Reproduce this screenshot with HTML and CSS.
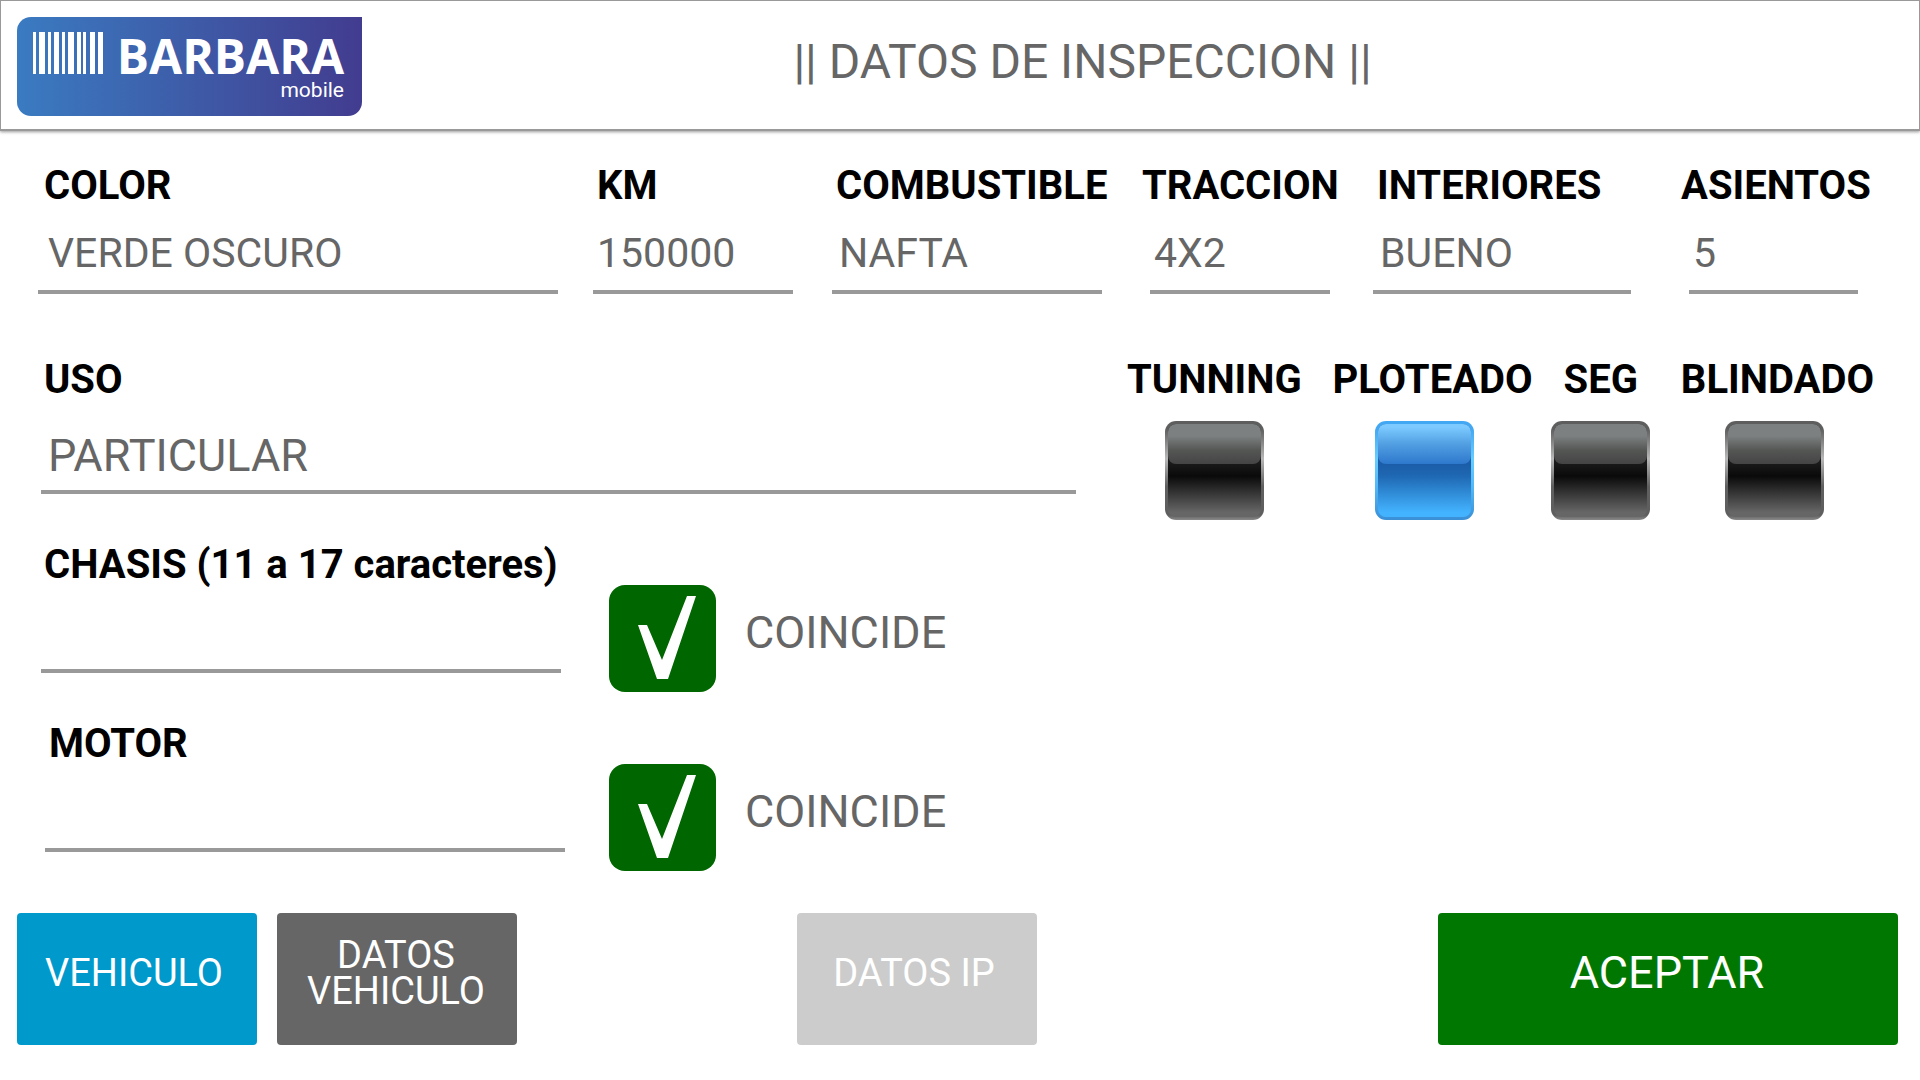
FILE: index.html
```html
<!DOCTYPE html>
<html lang="es">
<head>
<meta charset="utf-8">
<meta name="viewport" content="width=device-width, initial-scale=1">
<title>Datos de inspeccion</title>
<link rel="stylesheet" href="styles.css">
</head>
<body>
<header class="topbar">
  <svg class="logo" viewBox="0 0 345 99" role="img" aria-label="Barbara mobile">
    <defs>
      <linearGradient id="logo-fill" x1="0" y1="0" x2="1" y2="0">
        <stop offset="0" stop-color="#3a7bc1"/>
        <stop offset="1" stop-color="#423c8f"/>
      </linearGradient>
    </defs>
    <path fill="url(#logo-fill)" d="M14 0H345V85A14 14 0 0 1 331 99H14A14 14 0 0 1 0 85V14A14 14 0 0 1 14 0Z"/>
    <path fill="#fff" d="M16 15h3v42h-3zM22 15h6v42h-6zM31 15h3v42h-3zM37 15h5v42h-5zM45 15h3v42h-3zM51 15h6v42h-6zM60 15h4v42h-4zM66 15h3v42h-3zM73 15h5v42h-5zM81 15h5v42h-5z"/>
    <text class="logo-name" x="327" y="57" text-anchor="end">BARBARA</text>
    <text class="logo-sub" x="327" y="80" text-anchor="end">mobile</text>
  </svg>
  <h1 class="title">|| DATOS DE INSPECCION ||</h1>
</header>

<main>
  <form class="form">
    <div class="row specs">
      <div class="field field-color">
        <label for="color">COLOR</label>
        <input id="color" type="text" value="VERDE OSCURO">
      </div>
      <div class="field field-km">
        <label for="km">KM</label>
        <input id="km" type="text" value="150000">
      </div>
      <div class="field field-fuel">
        <label for="combustible">COMBUSTIBLE</label>
        <input id="combustible" type="text" value="NAFTA">
      </div>
      <div class="field field-drive">
        <label for="traccion">TRACCION</label>
        <input id="traccion" type="text" value="4X2">
      </div>
      <div class="field field-interior">
        <label for="interiores">INTERIORES</label>
        <input id="interiores" type="text" value="BUENO">
      </div>
      <div class="field field-seats">
        <label for="asientos">ASIENTOS</label>
        <input id="asientos" type="text" value="5">
      </div>
    </div>

    <div class="row usage">
      <div class="field large">
        <label for="uso">USO</label>
        <input id="uso" type="text" value="PARTICULAR">
      </div>
      <div class="toggles">
        <div class="toggle"><label for="tunning">TUNNING</label><input id="tunning" type="checkbox"></div>
        <div class="toggle toggle-wrap"><label for="ploteado">PLOTEADO</label><input id="ploteado" type="checkbox" checked></div>
        <div class="toggle toggle-seg"><label for="seg">SEG</label><input id="seg" type="checkbox"></div>
        <div class="toggle toggle-armor"><label for="blindado">BLINDADO</label><input id="blindado" type="checkbox"></div>
      </div>
    </div>

    <div class="row match">
      <div class="field large">
        <label for="chasis">CHASIS (11 a 17 caracteres)</label>
        <input id="chasis" type="text">
      </div>
      <div class="check">
        <input id="chasis-ok" type="checkbox" checked>
        <label for="chasis-ok">COINCIDE</label>
      </div>
    </div>

    <div class="row match indented">
      <div class="field large">
        <label for="motor">MOTOR</label>
        <input id="motor" type="text">
      </div>
      <div class="check">
        <input id="motor-ok" type="checkbox" checked>
        <label for="motor-ok">COINCIDE</label>
      </div>
    </div>
  </form>

  <nav class="actions">
    <button class="btn btn-vehicle" type="button">VEHICULO</button>
    <button class="btn btn-data" type="button">DATOS VEHICULO</button>
    <button class="btn btn-ip" type="button">DATOS IP</button>
    <button class="btn btn-accept" type="button">ACEPTAR</button>
  </nav>
</main>
</body>
</html>
```
FILE: styles.css
```css
* {
  box-sizing: border-box;
}

body {
  margin: 0;
  background: #fff;
  color: #666;
  font-family: Roboto, "Liberation Sans", sans-serif;
  font-size: 40px;
}

/* Header */
.topbar {
  display: grid;
  grid-template-columns: 345px 1fr;
  align-items: center;
  padding: 16px 16px 13px;
  border: 1px solid #999;
  border-bottom-width: 2px;
  box-shadow: 0 1px 3px rgba(0, 0, 0, 0.4);
}

.logo {
  display: block;
  width: 100%;
}

.logo-name {
  fill: #fff;
  font: 700 48px "Open Sans", "Noto Sans", sans-serif;
}

.logo-sub {
  fill: #fff;
  font: 400 21px Roboto, sans-serif;
}

.title {
  margin: 0;
  padding: 0 100px 10px 0;
  font-size: 48px;
  font-weight: 400;
  line-height: 56px;
  text-align: center;
}

/* Form */
.form {
  display: flex;
  flex-direction: column;
  padding: 31px 46px 0 38px;
}

.field {
  display: flex;
  flex-direction: column;
  gap: 19px;
  min-width: 0;
}

.field label,
.toggle label {
  color: #000;
  font-weight: 700;
  line-height: 48px;
  white-space: nowrap;
}

.field label {
  padding-left: 4px;
}

.field input {
  width: 100%;
  height: 65px;
  padding: 0 7px 14px;
  border: 0;
  border-bottom: 4px solid #999;
  border-radius: 0;
  outline: 0;
  background: none;
  color: #666;
  font: inherit;
  font-size: 41px;
}

.field.large input {
  padding-bottom: 8px;
  font-size: 45px;
}

.specs {
  display: grid;
  grid-template-columns: 555fr 239fr 310fr 231fr 308fr 193fr;
}

.field-color {
  padding-right: 35px;
}

.field-color label {
  padding-left: 6px;
}

.field-color input {
  padding-left: 10px;
}

.field-km {
  padding-right: 39px;
}

.field-km input {
  padding-left: 4px;
}

.field-fuel {
  padding-right: 40px;
}

.field-interior {
  padding-right: 50px;
}

.field-drive {
  padding-right: 51px;
}

.field-seats {
  padding-right: 24px;
}

.field-drive label,
.field-seats label {
  padding-left: 0;
}

.field-drive input,
.field-seats input {
  margin-left: 8px;
  padding-left: 4px;
}

.usage {
  display: grid;
  grid-template-columns: 1038fr 747fr;
  gap: 51px;
  margin-top: 62px;
}

.usage .field {
  gap: 25px;
  padding-left: 3px;
}

.usage .field label,
.match .field label {
  padding-left: 3px;
}

/* Glossy toggles */
.toggles {
  display: flex;
  justify-content: space-between;
}

.toggle {
  display: flex;
  flex-direction: column;
  align-items: center;
  gap: 17px;
}

.toggle input {
  appearance: none;
  display: block;
  width: 99px;
  height: 99px;
  margin: 0;
  padding: 3px;
  border-radius: 11px;
  background:
    linear-gradient(#1c1c1c 40%, #0a0a0a 56%, #666 95%) content-box,
    linear-gradient(#5e5e5e 8%, #b8b8b8 38%, #606060 66%, #5e5e5e 95%, #8a8a8a);
}

.toggle input::before {
  content: "";
  display: block;
  height: 40px;
  border-radius: 8px;
  background: linear-gradient(#7c8080 30%, #545654 66%, #444);
}

.toggle input:checked {
  background:
    linear-gradient(#1b5da8 44%, #1f68b3 56%, #43b3ff 95%) content-box,
    linear-gradient(#43a8f4 8%, #66cdff 38%, #52b8f8 66%, #3a8fd6);
}

.toggle input:checked::before {
  background: linear-gradient(#7ccaff 8%, #529fe2 50%, #2e78cc);
}

.toggle-wrap input {
  margin-right: 16px;
}

.toggle-seg {
  margin-left: -12px;
}

.toggle-armor input {
  margin-right: 6px;
}

/* Fields with a match confirmation */
.match {
  display: flex;
  align-items: flex-end;
  gap: 48px;
  margin-top: 28px;
}

.usage + .match {
  margin-top: 21px;
}

.match .field {
  flex: 0 1 523px;
  align-self: flex-start;
  gap: 19px;
  padding-left: 3px;
}

.indented .field {
  flex-basis: 527px;
  padding-left: 7px;
}

.indented {
  gap: 44px;
}

.indented .field label {
  padding-left: 4px;
}

.check {
  display: flex;
  align-items: center;
  gap: 29px;
  padding-top: 44px;
}

.check input {
  appearance: none;
  flex: none;
  width: 107px;
  height: 107px;
  margin: 0;
  border-radius: 16px;
  background: #060;
}

.check input:checked::before {
  content: "";
  display: block;
  height: 100%;
  background: #fff;
  clip-path: polygon(29px 40px, 38px 40px, 53px 75px, 78px 11px, 87px 11px, 59px 94px, 48px 94px);
}

.check label {
  padding-bottom: 12px;
  font-size: 45px;
}

/* Bottom buttons */
.actions {
  display: grid;
  grid-template-columns: 240fr 240fr 240fr 240fr 361fr 460fr;
  gap: 20px;
  padding: 42px 22px 35px 17px;
}

.btn {
  height: 132px;
  padding: 0 26px 13px 20px;
  border: 0;
  border-radius: 4px;
  color: #fff;
  font-family: inherit;
  font-size: 38px;
  line-height: 36px;
}

.btn-vehicle {
  background: #09c;
}

.btn-data {
  padding-right: 22px;
  background: #666;
}

.btn-ip {
  grid-column: 4;
  background: #ccc;
}

.btn-accept {
  grid-column: 6;
  padding-right: 22px;
  background: #070;
  font-size: 45px;
}
```
